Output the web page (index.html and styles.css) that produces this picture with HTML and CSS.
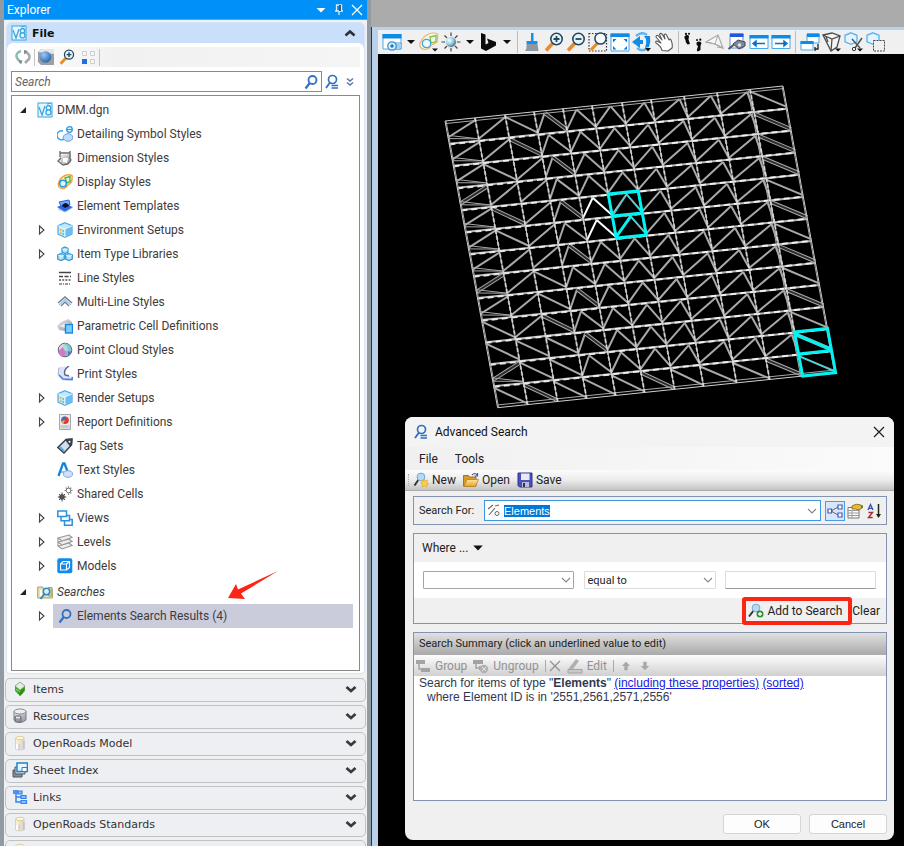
FILE: index.html
```html
<!DOCTYPE html>
<html lang="en">
<head>
<meta charset="utf-8">
<title>Explorer</title>
<link rel="stylesheet" href="styles.css">
</head>
<body>
<svg class="defs" aria-hidden="true">
  <defs>
    <linearGradient id="sky" x1="0" y1="0" x2="1" y2="1"><stop offset="0" stop-color="#d8f3ff"/><stop offset="1" stop-color="#55b4ee"/></linearGradient>
    <linearGradient id="grey" x1="0" y1="0" x2="1" y2="1"><stop offset="0" stop-color="#f2f3f6"/><stop offset="1" stop-color="#8d9099"/></linearGradient>
    <linearGradient id="gold" x1="0" y1="0" x2="0" y2="1"><stop offset="0" stop-color="#ffe39a"/><stop offset="1" stop-color="#e3a32c"/></linearGradient>
    <linearGradient id="cream" x1="0" y1="0" x2="1" y2="0"><stop offset="0" stop-color="#fff6c4"/><stop offset="1" stop-color="#d8d2cc"/></linearGradient>
    <radialGradient id="ball" cx=".35" cy=".3" r=".8"><stop offset="0" stop-color="#9cc8f4"/><stop offset="1" stop-color="#1c5ea8"/></radialGradient>
    <radialGradient id="sun" cx=".35" cy=".35" r=".7"><stop offset="0" stop-color="#fff"/><stop offset=".5" stop-color="#8fd4ee"/><stop offset="1" stop-color="#555"/></radialGradient>
    <symbol id="v8" viewBox="0 0 16 16"><rect x="1" y="1" width="14" height="14" fill="#e9f6fd" stroke="#3aa5e0"/><path d="M2 5l3 8 3-9M11.5 3.5a2 2 0 1 1 0 4.4 2.4 2.4 0 1 1 0 5 2.400 2.400 0 1 1 0-5 2 2 0 1 1 0-4.400" fill="none" stroke="#3aa5e0" stroke-width="1.300"/><path d="M10 2l4-1" stroke="#3aa5e0"/></symbol>
    <symbol id="detail" viewBox="0 0 16 16"><path d="M6 5a4.500 4.500 0 1 0 1 8" fill="none" stroke="#39a7ea" stroke-width="1.500"/><ellipse cx="11" cy="11.500" rx="4.800" ry="3.800" fill="#bcdcfa" stroke="#6f9fdb"/><circle cx="12.500" cy="3.500" r="2.800" fill="#dff2ff" stroke="#2c9be6" stroke-width="1.300"/><path d="M10 3.500h5" stroke="#2c9be6"/></symbol>
    <symbol id="dim" viewBox="0 0 16 16"><path d="M2 5l12-1v8l-4 3-6-2z" fill="url(#grey)"/><path d="M3 1v6M13 1v6M3 3h10M4 8l-3 3 5 4 5-1 3-4-2-3" fill="none" stroke="#6d6764" stroke-width="1.300"/><path d="M6 8h5l-1 5-4-1z" fill="#fff"/></symbol>
    <symbol id="display" viewBox="0 0 16 16"><path d="M1.500 9q-1 5 4 5.500 3 .500 5-3l4-3.500q1-4 .500-6.500-3-1.500-7 0Q3 4 1.500 9z" fill="#fff5e6" stroke="#f1a33b" stroke-width="1.400"/><path d="M8 4l5-1.500v5L10 9z" fill="#e9f8dd" stroke="#66b22e" stroke-width="1.400"/><circle cx="6" cy="9.500" r="3.300" fill="#dff4ff" stroke="#229be6" stroke-width="1.600"/></symbol>
    <symbol id="t-display" viewBox="0 0 20 20"><path d="M1 11q-1 6 5 6.500 4 0 6-4l6-3.500q1-5 .500-8-4-2-9 0-6 3-8.500 9z" fill="#fbf6ec" stroke="#eeb468" stroke-width="1.200"/><path d="M11 5l6-1.500v6L12 11z" fill="#f2faec" stroke="#7cc043" stroke-width="1.300"/><circle cx="7.500" cy="11.500" r="4.200" fill="#eef9ff" stroke="#3da5e6" stroke-width="1.300"/><path d="M13 16.500h6L16 19.500z" fill="#111"/></symbol>
    <symbol id="templates" viewBox="0 0 16 16"><path d="M2 4l10-2 1 5-8 3z" fill="#76a8ff" stroke="#2c63d6"/><path d="M0 9l7-3 9 3-8 5z" fill="#2d67e2"/><path d="M5 8q1-3 4-3 3 1 3 3l-4 2z" fill="#08132d"/><path d="M1 11l7 3 7-4" fill="none" stroke="#9dbef8"/></symbol>
    <symbol id="cube" viewBox="0 0 16 16"><path d="M8 .700l7 3v8.500l-7 3.100-7-3.100V3.700z" fill="#bfe7fd" stroke="#4cabe6" stroke-width="1.200"/><path d="M8 7l7-3.300v8.500L8 15.300z" fill="#6bbcf0"/><path d="M1 3.700L8 7l7-3.300M8 7v8" fill="none" stroke="#e8f8ff"/><path d="M3 8h1.500M3 11h1.500" stroke="#f2a53a" stroke-width="1.500"/><path d="M5.500 9h1.500M5.500 12h1.500" stroke="#6dbb4e" stroke-width="1.500"/></symbol>
    <symbol id="cubes" viewBox="0 0 16 16"><g fill="#bde3ee" stroke="#2c9be0" stroke-width="1.300"><path d="M8 1l3 1.500V6L8 7.500 5 6V2.500zM4 7.500L7.300 9v4L4 14.500.700 13V9zM12 7.500L15.300 9v4L12 14.500 8.700 13V9z"/></g><path d="M5 3l3 1 3-1M1 9l3 1.500L7 9M9 9l3 1.500L15 9" fill="none" stroke="#fff" stroke-width=".700"/></symbol>
    <symbol id="lines" viewBox="0 0 16 16"><path d="M2 2.500h12" stroke="#444" stroke-width="1.500"/><path d="M2 6.500h12" stroke="#444" stroke-width="1.500" stroke-dasharray="4 1.500"/><path d="M2 10h12" stroke="#555" stroke-width="1.300" stroke-dasharray="2 1.200"/><path d="M2 14h12" stroke="#777" stroke-width="1.300" stroke-dasharray="3 1 1 1"/></symbol>
    <symbol id="multi" viewBox="0 0 16 16"><path d="M1 9l7-6 7 6M4 12l4-4 4 4" fill="none" stroke="#777c84" stroke-width="1.400"/><path d="M2 11l6-5.500 6 5.500" fill="none" stroke="#8dcaf2" stroke-width="1.400"/></symbol>
    <symbol id="param" viewBox="0 0 16 16"><path d="M0 8l4-4 7-3 4 3v4H8v5l-6-1z" fill="url(#grey)"/><path d="M3 8l6-3 4 1H8v4z" fill="#eef0f8"/><rect x="8.500" y="6.500" width="7" height="8.500" fill="#77d0ff" stroke="#1686e0" stroke-width="1.400"/></symbol>
    <symbol id="cloud" viewBox="0 0 16 16"><circle cx="8" cy="8" r="6.800" fill="url(#grey)" stroke="#5a5f70"/><path d="M8 1q6 2 6.500 7L10 14 7 8z" fill="#7fc4d8"/><path d="M1.500 9L6 5l3 6-3 4q-4-1-4.500-6z" fill="#d47ac0"/><path d="M6 3l4 1 1 5-4-1z" fill="#a6e0d6"/><path d="M11 9l3 1-3 4z" fill="#5b6fc2"/></symbol>
    <symbol id="print" viewBox="0 0 16 16"><path d="M1 2q3-2 9-1-4 4-1 8l6 2-1 3q-5 2-9 0L1 10z" fill="#dbe4f7"/><path d="M2 9l4 4 9 .500.500-2.500" fill="none" stroke="#4b80e0" stroke-width="1.700"/><path d="M12 0Q6 4 8 9l4 1" fill="none" stroke="#5b6580" stroke-width="1.400"/><path d="M2 1.500L1 9" stroke="#a9b6d6"/></symbol>
    <symbol id="report" viewBox="0 0 16 16"><path d="M2.500.500h11v15h-11z" fill="#e9ebee" stroke="#a4a7ab"/><path d="M3.500 11h9v3.500h-9z" fill="#c9cbd0"/><circle cx="8" cy="6.300" r="3.800" fill="#e4392b"/><path d="M8 6.300V2.500A3.800 3.800 0 0 0 4.300 7z" fill="#2f72d8"/><path d="M8 6.300L4.300 7l2 3z" fill="#f3b52b"/></symbol>
    <symbol id="tag" viewBox="0 0 16 16"><path d="M.800 9.500L9 1.500 15 1l-.500 6L7 15z" fill="#cfe0ec" stroke="#39404a" stroke-width="1.500"/><path d="M9.500 1L15.500.500 15 7l-2 1.500-4.500-6z" fill="#39404a"/><circle cx="12.500" cy="3.700" r="1" fill="#fff"/><path d="M3 9l4 4" stroke="#5fa8dc" stroke-width="2"/></symbol>
    <symbol id="text" viewBox="0 0 16 16"><path d="M1.500 14L6 1.500h1.500l3 8" fill="none" stroke="#1584dd" stroke-width="2.300"/><path d="M4 10h4" stroke="#58b0ee" stroke-width="1.500"/><ellipse cx="11" cy="12" rx="4.500" ry="3.300" fill="#cfe0f8" stroke="#86a8d8"/></symbol>
    <symbol id="shared" viewBox="0 0 16 16"><circle cx="5" cy="11" r="2.800" fill="#444"/><path d="M5 6.500v9M.800 11h8.500M2 8l6 6M8 8l-6 6" stroke="#555" stroke-width="1"/><circle cx="11.500" cy="4.500" r="2.300" fill="#fff" stroke="#777"/><path d="M11.500.300v1.500M11.500 7.200v1.500M7.500 4.500H9M14 4.500h1.500M8.700 1.700l1 1M14.300 1.700l-1 1M14.300 7.300l-1-1" stroke="#777" stroke-width="1.200"/></symbol>
    <symbol id="views" viewBox="0 0 16 16"><g fill="#fff" stroke="#2a92dd" stroke-width="1.500"><path d="M7.500 9.500h7.700v5.700H7.500z"/><path d="M4 5.500h8.500v5.300H4z"/><path d="M.800 1h8.700v5.500H.800z"/></g></symbol>
    <symbol id="levels" viewBox="0 0 16 16"><g fill="#eee" stroke="#969696" stroke-width="1.100"><path d="M1 12l11-3 3 2.500L5 15z"/><path d="M1 8l11-3 3 2.500L5 11z"/><path d="M1 4l11-3 3 2.500L5 7z"/><path d="M1 4v3.500M1 8v3.500"/></g></symbol>
    <symbol id="models" viewBox="0 0 16 16"><rect x=".300" y=".300" width="15" height="15" rx="2" fill="#118bea"/><path d="M3.500 6h6v6h-6zM3.500 6l2.500-2.500h6.500v6L9.500 12M9.500 6l3-2.500" fill="none" stroke="#fff" stroke-width="1.100"/></symbol>
    <symbol id="folder" viewBox="0 0 16 16"><path d="M.700 3h5l1 2h8.600v9H.700z" fill="#e9e0b4" stroke="#a89f6d"/><path d="M11.500 3.500h3.500V12h-3.500z" fill="#d6c98e" stroke="#a89f6d"/><path d="M3 6h2v6H3z" fill="#fff"/><circle cx="9.500" cy="7.500" r="3.200" fill="#dff1fb" stroke="#2b8cc8" stroke-width="1.500"/><path d="M7.500 10l-4 5" stroke="#2b8cc8" stroke-width="2"/></symbol>
    <symbol id="find" viewBox="0 0 16 16"><circle cx="9.500" cy="6" r="4" fill="none" stroke="#2f71c6" stroke-width="1.800"/><path d="M6.800 9L2.500 14.500" stroke="#2f71c6" stroke-width="2.200"/></symbol>
    <symbol id="findeq" viewBox="0 0 16 16"><circle cx="8.500" cy="5.500" r="4" fill="none" stroke="#2f71c6" stroke-width="1.700"/><path d="M6 8.500L2 14" stroke="#2f71c6" stroke-width="1.900"/><path d="M7.500 11.500H14M7.500 14H14" stroke="#2f71c6" stroke-width="1.300"/></symbol>
    <symbol id="chev2" viewBox="0 0 16 16"><path d="M5 4.500l3 2.500 3-2.500M5 8.500l3 2.500 3-2.500" fill="none" stroke="#5a74ac" stroke-width="1.500"/></symbol>
    <symbol id="refresh" viewBox="0 0 16 16"><path d="M6 2Q0 4 2 9l4 5" fill="none" stroke="#8eb9b4" stroke-width="2.500"/><path d="M9.500 2.500Q16 5 14 10l-4 4" fill="none" stroke="#a3a8ae" stroke-width="2.500"/><path d="M3.500 11l4 .500-1.500 4zM12.500 2L9 5.500 9 1z" fill="#7d8c90"/></symbol>
    <symbol id="sphere" viewBox="0 0 16 16"><path d="M0 3L3 0h13v16H3l-3-3z" fill="#9b9ea2"/><path d="M0 3L3 0h13v5z" fill="#e6e6e6"/><circle cx="7.500" cy="8" r="5.800" fill="url(#ball)"/></symbol>
    <symbol id="zin" viewBox="0 0 20 20"><path d="M9 11L2 18.500" stroke="#e98c2a" stroke-width="3.600"/><circle cx="12.500" cy="7" r="5.700" fill="#e6f5fc" stroke="#23465f" stroke-width="1.600"/><path d="M9.500 7h6M12.500 4v6" stroke="#23465f" stroke-width="1.800"/></symbol>
    <symbol id="zout" viewBox="0 0 20 20"><path d="M9 11L2 18.500" stroke="#e98c2a" stroke-width="3.600"/><circle cx="12.500" cy="7" r="5.700" fill="#e6f5fc" stroke="#23465f" stroke-width="1.600"/><path d="M9.500 7h6" stroke="#23465f" stroke-width="1.800"/></symbol>
    <symbol id="zwin" viewBox="0 0 20 20"><path d="M1 1.500h17.500v17.500H1z" fill="none" stroke="#333" stroke-width="1.200" stroke-dasharray="1.500 1.500"/><path d="M9.500 11L3 18" stroke="#e98c2a" stroke-width="3.200"/><circle cx="12.500" cy="6.500" r="5.600" fill="#f2fafd" stroke="#23465f" stroke-width="1.500"/></symbol>
    <symbol id="squares" viewBox="0 0 16 16"><g fill="none" stroke="#d0d0d0"><path d="M2.500 2.500h4v4h-4zM10.500 2.500h4v4h-4zM10.500 10.500h4v4h-4z"/></g><path d="M2 10h5v5H2z" fill="#1f6fe0"/></symbol>
    <symbol id="items" viewBox="0 0 16 16"><path d="M8 1l5 4v5l-5 5-5-5V5z" fill="#4caf2a"/><path d="M8 1l5 4-5 4-5-4z" fill="#e2eee0" stroke="#8a9b88" stroke-width=".700"/><path d="M3 6l5 4 5-4-2 6-3 3z" fill="#2f8c17"/><path d="M4 8l4 3" stroke="#a8e88c"/></symbol>
    <symbol id="disk" viewBox="0 0 16 16"><path d="M2 3v9q6 5 12 0V3z" fill="url(#grey)" stroke="#7f7f86"/><ellipse cx="8" cy="3.500" rx="6" ry="2.500" fill="#eceef2" stroke="#8a8a92"/><rect x="3" y="8" width="6" height="6" rx="1" fill="#9a9aa6" stroke="#666672"/><path d="M4 9.500h4" stroke="#eee" stroke-width="1.500"/></symbol>
    <symbol id="cyl" viewBox="0 0 16 16"><path d="M3.500 3h8.500v11q-4 2-8.500 0z" fill="url(#cream)" stroke="#d8d2c0"/><ellipse cx="8" cy="3" rx="4.200" ry="1.700" fill="#fff9d9" stroke="#d8cfa4"/><path d="M4 9h3v5H4z" fill="#fff"/><path d="M7 9v5M12 6v8" stroke="#bcaee0"/></symbol>
    <symbol id="sheets" viewBox="0 0 16 16"><path d="M1 8h9v7H1z" fill="#888f98" stroke="#4e5660"/><path d="M3 5h10v7H3z" fill="#cbd2d8" stroke="#4e5660"/><path d="M5 1h10.500v8.500H5z" fill="#eaf6ff" stroke="#1f84c8" stroke-width="1.500"/><path d="M10 5.500h5v4h-5z" fill="#fff" stroke="#1f84c8"/></symbol>
    <symbol id="links" viewBox="0 0 16 16"><path d="M4 4v9h5M4 8h5" fill="none" stroke="#3583ef" stroke-width="1.500"/><path d="M1 1h5v4H1z" fill="#4b93f5"/><path d="M6 2h4v3H6zM9 6.500h5v3H9zM9 11.500h5.500v3H9z" fill="#8bbcff" stroke="#3583ef" stroke-width="1.200"/></symbol>
    <symbol id="down" viewBox="0 0 12 12"><path d="M1.500 4L6 8l4.500-4" fill="none" stroke="#3a3a3a" stroke-width="2.800"/></symbol>
    <symbol id="thin" viewBox="0 0 12 12"><path d="M2 4l4 4 4-4" fill="none" stroke="#888" stroke-width="1.100"/></symbol>
    <symbol id="caret" viewBox="0 0 10 10"><path d="M1 3h8L5 7z" fill="#111"/></symbol>
    <symbol id="closed" viewBox="0 0 12 12"><path d="M3.500 2l4.500 4-4.500 4z" fill="#fff" stroke="#444" stroke-width="1.100"/></symbol>
    <symbol id="open" viewBox="0 0 12 12"><path d="M9 3v6H3z" fill="#222"/></symbol>
    <symbol id="x" viewBox="0 0 12 12"><path d="M1 1l10 10M11 1L1 11" fill="none" stroke="currentColor" stroke-width="1.300"/></symbol>
    <symbol id="t-view" viewBox="0 0 20 20"><path d="M1 2.500h18V17H1z" fill="#fff" stroke="#4bacec"/><path d="M.500 2h19v4.500H.500z" fill="#0d8be8"/><path d="M12 11h7v6h-7z" fill="#fff" stroke="#3aa0e4"/><path d="M13 13h5M13 15h5" stroke="#3aa0e4"/><circle cx="10" cy="14" r="4.200" fill="#dcefff" stroke="#3a8fd0" stroke-width="1.300"/><circle cx="10" cy="14" r="1.700" fill="#2473bd"/></symbol>
    <symbol id="t-sun" viewBox="0 0 20 20"><path d="M10 .500v19M.500 10h19M3.500 3.500l13 13M16.500 3.500l-13 13" stroke="#444" stroke-width="1.200"/><circle cx="10" cy="10" r="5.500" fill="url(#sun)" stroke="#f0f0f0"/></symbol>
    <symbol id="t-bing" viewBox="0 0 20 20"><path d="M3 1l4.500 1.500v10l3-1.500-1.500-4.500 9 3.500v3.500L8 19l-5-2.500z" fill="#0b0b0b"/></symbol>
    <symbol id="t-brush" viewBox="0 0 20 20"><path d="M9 1h2.500v8h4v3H4.500V9H9z" fill="#1590ea"/><path d="M4.500 12h11l1 7H3q2-2 1.500-7z" fill="#8d97a1"/></symbol>
    <symbol id="t-fit" viewBox="0 0 20 20"><path d="M1 2h18v17H1z" fill="#fff" stroke="#47a9ec"/><path d="M.500 1.500h19V5H.500z" fill="#0d8be8"/><g fill="#0d7ad8"><path d="M3 7h3.500L3 10.500zM17 7h-3.500l3.500 3.500zM3 17.500h3.500L3 14zM17 17.500h-3.500L17 14z"/></g></symbol>
    <symbol id="t-rot" viewBox="0 0 20 20"><path d="M0 10l8-6v4h3v4H8v4z" fill="#128ce5"/><path d="M4 4q6-5 11-1M5 16q5 4 9 1" fill="none" stroke="#62b7f0" stroke-width="2.500"/><path d="M12 4h6q1 6-1 11l-4 1q2-5 1-9z" fill="#128ce5"/><path d="M13 16h6l-3 3.500z" fill="#111"/></symbol>
    <symbol id="t-hand" viewBox="0 0 20 20"><path d="M8 18.500Q7 14 2 11q-1-2 1-2l4 2L2 5q0-2 2-1.500L8 8 5.500 2.500q1-2 2.500-.500l3 5L10 3q1-2 2.500 0L15 8q1-2 2 0 2 5 1 8l-4 3z" fill="#fff" stroke="#555" stroke-width="1.100" stroke-linejoin="round"/></symbol>
    <symbol id="t-feet" viewBox="0 0 20 20"><g fill="#0a0a0a"><path d="M1.500 4.500Q4 2 6 4l-.500 3.500L7 12l-2.500.500Q2 10 2.500 8q-1.500-2-1-3.500zM13.500 10.500q3-2 5 .500l-1 3 0 4-2.500 1.500q-2-1-.500-3.500l.500-2q-2-1-1.500-3.500z"/><circle cx="3" cy="1.900" r="1.100"/><circle cx="6" cy="1.700" r="1"/><circle cx="14" cy="8" r="1"/><circle cx="17.300" cy="7.700" r="1.100"/></g></symbol>
    <symbol id="t-fly" viewBox="0 0 20 20"><path d="M1 10L13 3l5 13-8-4z" fill="#f7f7f7" stroke="#a8a8a8" stroke-width="1.200"/><path d="M1 10l9 2 3-9M10 12l8 4-6-1" fill="none" stroke="#a8a8a8"/></symbol>
    <symbol id="t-cam" viewBox="0 0 20 20"><path d="M3 2h13v14H3z" fill="#fff" stroke="#6388e8"/><path d="M3 1.500h13.500V5H3z" fill="#2455dc"/><path d="M6 12l5-4 7 2v4l-6 3z" fill="#818795" stroke="#3d4354"/><circle cx="12.500" cy="13" r="1.700" fill="#dce8f5"/><path d="M1.500 17l5-4" stroke="#4d5260" stroke-width="2"/></symbol>
    <symbol id="t-prev" viewBox="0 0 20 20"><path d="M1 3.500h18v13H1z" fill="#fff" stroke="#47a9ec"/><path d="M.500 3h19v3.500H.500z" fill="#0d8be8"/><path d="M4 11.500h12M4 11.500L7 9v5z" stroke="#0d70c8" stroke-width="1.500" fill="#0d70c8"/></symbol>
    <symbol id="t-next" viewBox="0 0 20 20"><path d="M1 3.500h18v13H1z" fill="#fff" stroke="#47a9ec"/><path d="M.500 3h19v3.500H.500z" fill="#0d8be8"/><path d="M4 11.500h12M16 11.500L13 9v5z" stroke="#0d70c8" stroke-width="1.500" fill="#0d70c8"/></symbol>
    <symbol id="t-copy" viewBox="0 0 20 20"><path d="M7 2h12v9H7z" fill="#fff" stroke="#47a9ec"/><path d="M7 1.500h12.500V5H7z" fill="#0d8be8"/><path d="M1 9.500h12V18H1z" fill="#fff" stroke="#47a9ec"/><path d="M.500 9h13v3H.500z" fill="#0d8be8"/><path d="M15 17h3v-5M15 15v4" fill="none" stroke="#222" stroke-width="1.300"/></symbol>
    <symbol id="t-vol" viewBox="0 0 20 20"><path d="M1 3l9-2 8 3-3 11-6 4z" fill="#f4f4f4" stroke="#4c4c4c" stroke-width="1.300"/><path d="M1 3l9 4 8-3M10 7L9 19M4 5l2 5" fill="none" stroke="#4c4c4c" stroke-width="1.300"/><path d="M13 16.500h6L16 19.500z" fill="#111"/></symbol>
    <symbol id="t-clip" viewBox="0 0 20 20"><path d="M7 .800l6 2.500v6.500l-6 2.500L1 9.800V3.300z" fill="#e2f4ff" stroke="#5cb3ea" stroke-width="1.300"/><path d="M18 6l-7 10M8 7l8 9" stroke="#555" stroke-width="1.500"/><circle cx="10" cy="17" r="1.700" fill="none" stroke="#333"/><path d="M13 16.500h6L16 19.500z" fill="#111"/></symbol>
    <symbol id="t-mask" viewBox="0 0 20 20"><path d="M7 .800l6 2.500v6.500l-6 2.500L1 9.800V3.300z" fill="#e2f4ff" stroke="#5cb3ea" stroke-width="1.300"/><path d="M7.500 8.500h11v10.500h-11z" fill="#f0f0f0" stroke="#444" stroke-dasharray="2 1"/></symbol>
    <symbol id="new" viewBox="0 0 16 16"><path d="M6 7L1.500 13.500" stroke="#333" stroke-width="2"/><circle cx="8" cy="5" r="3.900" fill="#b7d9f8" stroke="#7da6cc"/><path d="M11 7l1 2 2.500-1-.500 2.500L16 12l-2.300.700.300 2.300-2.500-1L9 15l.300-2.300L7.500 11l2-.700L9 8l2 1z" fill="#f6cf45" stroke="#d9a92a" stroke-width=".600"/></symbol>
    <symbol id="openf" viewBox="0 0 16 16"><path d="M.500 3.500h5l1 1.500H13v9H.500z" fill="#d79a2e" stroke="#a87522"/><path d="M.800 14.500L4 7.500h11.500l-3 7z" fill="url(#gold)" stroke="#b07a22" stroke-width=".700"/><path d="M9 3q3-3 5 0M14.500 1v3h-3" fill="none" stroke="#3b5b8a" stroke-width="1.200"/></symbol>
    <symbol id="save" viewBox="0 0 16 16"><path d="M1 1h14v14H2.500L1 13.500z" fill="#4b51b5" stroke="#30358c"/><path d="M4 1.500h8.500V8H4z" fill="#e8eafc"/><path d="M5 10h7v5H5z" fill="#b9bdd9"/><path d="M6 11h2v4H6z" fill="#2b2f6e"/></symbol>
    <symbol id="addto" viewBox="0 0 16 16"><path d="M6 7L1 13.500" stroke="#333" stroke-width="2"/><circle cx="8" cy="5" r="3.900" fill="#b7d9f8" stroke="#7da6cc"/><circle cx="12" cy="11" r="3.500" fill="#27922b"/><path d="M10 11h4M12 9v4" stroke="#fff" stroke-width="1.400"/></symbol>
    <symbol id="elem" viewBox="0 0 14 14"><path d="M1 5l5-4M2 11L8 4M8 2l4-1" fill="none" stroke="#666" stroke-width="1.100"/><circle cx="10" cy="9.500" r="2" fill="none" stroke="#666"/></symbol>
    <symbol id="net" viewBox="0 0 16 16"><path d="M4 8l7-4M4 8l7 4M4 8h2" stroke="#667" fill="none"/><g fill="#fff" stroke="#4a58b8" stroke-width="1.200"><path d="M1 6h3.500v4H1zM11 2h4v4h-4zM11 10h4v4h-4z"/></g></symbol>
    <symbol id="prop" viewBox="0 0 16 16"><path d="M1 4.500h11V15H1z" fill="#fff" stroke="#777"/><path d="M1 7.500h11M1 10h11M1 12.500h11M5 7v8" stroke="#999"/><path d="M5 3q4-3 9-1l1 3-3 2-3-1-4 0z" fill="#eab93c" stroke="#9a7420"/><path d="M14 2l2 .500V5l-2 0z" fill="#3f8b4a"/></symbol>
    <symbol id="az" viewBox="0 0 16 16"><path d="M2 7l2.500-5.500L7 7M3 5.300h3" fill="none" stroke="#2f4fc0" stroke-width="1.300"/><path d="M2.500 9.500h4l-4 5h4.200" fill="none" stroke="#a3302e" stroke-width="1.400"/><path d="M12.500 1v12" stroke="#222" stroke-width="1.500"/><path d="M10 11h5l-2.500 4z" fill="#222"/></symbol>
    <symbol id="grp" viewBox="0 0 16 16"><path d="M1 2h9v4H1zM6 10h9v4H6z" fill="#a3a3a3"/><path d="M4 6v5h3" fill="none" stroke="#a3a3a3" stroke-width="1.500"/></symbol>
    <symbol id="ungrp" viewBox="0 0 16 16"><path d="M0 2h10v4H0zM6 8h4v4H6z" fill="#a3a3a3"/><path d="M3 6v4h3" fill="none" stroke="#a3a3a3" stroke-width="1.500"/><circle cx="11" cy="11" r="4.200" fill="#b1b1b1"/><path d="M9 9l4 4M13 9l-4 4" stroke="#e4e4e4"/></symbol>
    <symbol id="edit" viewBox="0 0 16 16"><path d="M2 10l7-9 3 2-6 8H2z" fill="#b0b0b0"/><path d="M1 11.500h14v3.500H1z" fill="#c9c9c9" stroke="#a3a3a3"/></symbol>
    <symbol id="up" viewBox="0 0 12 12"><path d="M6 1l5 5H8v5H4V6H1z" fill="#a8a8a8"/></symbol>
    <symbol id="dn" viewBox="0 0 12 12"><path d="M6 11l5-5H8V1H4v5H1z" fill="#a8a8a8"/></symbol>
  </defs>
</svg>

<div class="app">
  <aside class="explorer">
    <header class="dock-title">
      <span class="dock-name">Explorer</span>
      <button aria-label="Window options"><svg class="i12" viewBox="0 0 12 12"><path d="M1.500 4h9L6 8.500z" fill="#fff"/></svg></button>
      <button aria-label="Pin"><svg class="i12" viewBox="0 0 12 12"><path d="M3.500 1h5v6h-5zM2 7h8M6 7v4" fill="none" stroke="#dcecf8" stroke-width="1.300"/><path d="M6 1h2v6H6z" fill="#5c5148"/></svg></button>
      <button aria-label="Close"><svg class="i12"><use href="#x"/></svg></button>
    </header>
    <div class="dock-body">
      <section class="file-panel">
        <button class="file-head"><svg class="i16"><use href="#v8"/></svg><b>File</b><svg class="i12" viewBox="0 0 12 12"><path d="M1.500 8.500L6 4.500l4.500 4" fill="none" stroke="#2c3036" stroke-width="2.600"/></svg></button>
        <div class="file-body">
          <div class="strip">
            <button aria-label="Refresh"><svg class="i16"><use href="#refresh"/></svg></button><span class="rule"></span>
            <button aria-label="Models"><svg class="i16"><use href="#sphere"/></svg></button>
            <button aria-label="Zoom"><svg class="i16"><use href="#zin"/></svg></button>
            <button aria-label="Arrange"><svg class="i16"><use href="#squares"/></svg></button><span class="rule"></span>
          </div>
          <div class="find">
            <div class="find-box"><input type="text" placeholder="Search" aria-label="Search"><button aria-label="Run search"><svg class="i16"><use href="#find"/></svg></button></div>
            <button aria-label="Advanced search"><svg class="i16"><use href="#findeq"/></svg></button>
            <button aria-label="More"><svg class="i16"><use href="#chev2"/></svg></button>
          </div>
          <div class="tree">
            <ul>
              <li class="row root"><svg class="i12"><use href="#open"/></svg><span class="node"><svg class="i16"><use href="#v8"/></svg>DMM.dgn</span></li>
              <li class="row leaf"><span class="node"><svg class="i16"><use href="#detail"/></svg>Detailing Symbol Styles</span></li>
              <li class="row leaf"><span class="node"><svg class="i16"><use href="#dim"/></svg>Dimension Styles</span></li>
              <li class="row leaf"><span class="node"><svg class="i16"><use href="#display"/></svg>Display Styles</span></li>
              <li class="row leaf"><span class="node"><svg class="i16"><use href="#templates"/></svg>Element Templates</span></li>
              <li class="row"><svg class="i12"><use href="#closed"/></svg><span class="node"><svg class="i16"><use href="#cube"/></svg>Environment Setups</span></li>
              <li class="row"><svg class="i12"><use href="#closed"/></svg><span class="node"><svg class="i16"><use href="#cubes"/></svg>Item Type Libraries</span></li>
              <li class="row leaf"><span class="node"><svg class="i16"><use href="#lines"/></svg>Line Styles</span></li>
              <li class="row leaf"><span class="node"><svg class="i16"><use href="#multi"/></svg>Multi-Line Styles</span></li>
              <li class="row leaf"><span class="node"><svg class="i16"><use href="#param"/></svg>Parametric Cell Definitions</span></li>
              <li class="row leaf"><span class="node"><svg class="i16"><use href="#cloud"/></svg>Point Cloud Styles</span></li>
              <li class="row leaf"><span class="node"><svg class="i16"><use href="#print"/></svg>Print Styles</span></li>
              <li class="row"><svg class="i12"><use href="#closed"/></svg><span class="node"><svg class="i16"><use href="#cube"/></svg>Render Setups</span></li>
              <li class="row"><svg class="i12"><use href="#closed"/></svg><span class="node"><svg class="i16"><use href="#report"/></svg>Report Definitions</span></li>
              <li class="row leaf"><span class="node"><svg class="i16"><use href="#tag"/></svg>Tag Sets</span></li>
              <li class="row leaf"><span class="node"><svg class="i16"><use href="#text"/></svg>Text Styles</span></li>
              <li class="row leaf"><span class="node"><svg class="i16"><use href="#shared"/></svg>Shared Cells</span></li>
              <li class="row"><svg class="i12"><use href="#closed"/></svg><span class="node"><svg class="i16"><use href="#views"/></svg>Views</span></li>
              <li class="row"><svg class="i12"><use href="#closed"/></svg><span class="node"><svg class="i16"><use href="#levels"/></svg>Levels</span></li>
              <li class="row"><svg class="i12"><use href="#closed"/></svg><span class="node"><svg class="i16"><use href="#models"/></svg>Models</span></li>
            </ul>
            <ul class="searches">
              <li class="row root"><svg class="i12"><use href="#open"/></svg><span class="node"><svg class="i16"><use href="#folder"/></svg><i>Searches</i></span></li>
              <li class="row"><svg class="i12"><use href="#closed"/></svg><span class="node selected"><svg class="i16"><use href="#find"/></svg>Elements Search Results (4)</span></li>
            </ul>
            <svg class="pointer" viewBox="0 0 52 32" aria-hidden="true"><path d="M1 28L9 14l2 5.500L51 1 14 23.500l4 5.500z" fill="#fc2414"/></svg>
          </div>
        </div>
      </section>
      <nav class="sections">
        <button><svg class="i16"><use href="#items"/></svg><span>Items</span><svg class="i12"><use href="#down"/></svg></button>
        <button><svg class="i16"><use href="#disk"/></svg><span>Resources</span><svg class="i12"><use href="#down"/></svg></button>
        <button><svg class="i16"><use href="#cyl"/></svg><span>OpenRoads Model</span><svg class="i12"><use href="#down"/></svg></button>
        <button><svg class="i16"><use href="#sheets"/></svg><span>Sheet Index</span><svg class="i12"><use href="#down"/></svg></button>
        <button><svg class="i16"><use href="#links"/></svg><span>Links</span><svg class="i12"><use href="#down"/></svg></button>
        <button><svg class="i16"><use href="#cyl"/></svg><span>OpenRoads Standards</span><svg class="i12"><use href="#down"/></svg></button>
        <button aria-label="Next section"><svg class="i16"><use href="#cyl"/></svg></button>
      </nav>
    </div>
  </aside>

  <main class="view">
    <div class="view-frame">
      <div class="view-tools">
        <button aria-label="View attributes"><svg><use href="#t-view"/></svg></button><button class="drop" aria-label="View attribute options"><svg><use href="#caret"/></svg></button>
        <button aria-label="Display style"><svg><use href="#t-display"/></svg></button>
        <button aria-label="Brightness"><svg><use href="#t-sun"/></svg></button><button class="drop" aria-label="Brightness options"><svg><use href="#caret"/></svg></button>
        <button aria-label="Background map"><svg><use href="#t-bing"/></svg></button><button class="drop" aria-label="Map options"><svg><use href="#caret"/></svg></button>
        <span class="bar"></span>
        <button aria-label="Update view"><svg><use href="#t-brush"/></svg></button>
        <button aria-label="Zoom in"><svg><use href="#zin"/></svg></button>
        <button aria-label="Zoom out"><svg><use href="#zout"/></svg></button>
        <button aria-label="Window area"><svg><use href="#zwin"/></svg></button>
        <button aria-label="Fit view"><svg><use href="#t-fit"/></svg></button>
        <button aria-label="Rotate view"><svg><use href="#t-rot"/></svg></button>
        <button aria-label="Pan view"><svg><use href="#t-hand"/></svg></button>
        <span class="bar"></span>
        <button aria-label="Walk"><svg><use href="#t-feet"/></svg></button>
        <button aria-label="Fly"><svg><use href="#t-fly"/></svg></button>
        <button aria-label="Camera"><svg><use href="#t-cam"/></svg></button>
        <button aria-label="View previous"><svg><use href="#t-prev"/></svg></button>
        <button aria-label="View next"><svg><use href="#t-next"/></svg></button>
        <span class="bar"></span>
        <button aria-label="Copy view"><svg><use href="#t-copy"/></svg></button>
        <button aria-label="Clip volume"><svg><use href="#t-vol"/></svg></button>
        <button aria-label="Clip"><svg><use href="#t-clip"/></svg></button>
        <button aria-label="Clip mask"><svg><use href="#t-mask"/></svg></button>
      </div>
      <div class="canvas">
        <svg class="mesh" id="mesh" viewBox="378 54 526 360" role="img" aria-label="Triangulated grid frame"></svg>

        <section class="dialog" role="dialog" aria-label="Advanced Search">
          <header class="dlg-title"><svg class="i16"><use href="#findeq"/></svg><h1>Advanced Search</h1><button aria-label="Close dialog"><svg class="i12"><use href="#x"/></svg></button></header>
          <div class="dlg-menu"><button>File</button><button>Tools</button></div>
          <div class="dlg-tools"><span class="grip"></span><button><svg class="i16"><use href="#new"/></svg>New</button><button><svg class="i16"><use href="#openf"/></svg>Open</button><button><svg class="i16"><use href="#save"/></svg>Save</button></div>
          <div class="dlg-body">
            <div class="box search-for">
              <label for="kind">Search For:</label>
              <div class="combo"><svg class="i14"><use href="#elem"/></svg><input id="kind" type="text" value="Elements"><svg class="i12"><use href="#thin"/></svg></div>
              <button class="on" aria-label="Show tree"><svg class="i16"><use href="#net"/></svg></button>
              <button aria-label="Properties"><svg class="i16"><use href="#prop"/></svg></button>
              <button aria-label="Sort"><svg class="i16"><use href="#az"/></svg></button>
            </div>
            <div class="box where">
              <button class="where-head">Where ...<svg class="i12"><use href="#caret"/></svg></button>
              <div class="criteria">
                <div class="pick strong"><select aria-label="Property"><option></option></select><svg class="i12"><use href="#thin"/></svg></div>
                <div class="pick op"><select aria-label="Operator"><option>equal to</option></select><svg class="i12"><use href="#thin"/></svg></div>
                <input type="text" aria-label="Value">
              </div>
              <div class="where-foot"><button class="add"><svg class="i16"><use href="#addto"/></svg>Add to Search</button><button>Clear</button></div>
            </div>
            <div class="box summary">
              <h2>Search Summary (click an underlined value to edit)</h2>
              <div class="sum-tools">
                <button disabled><svg class="i16"><use href="#grp"/></svg>Group</button>
                <button disabled><svg class="i16"><use href="#ungrp"/></svg>Ungroup</button>
                <span class="rule"></span>
                <button disabled aria-label="Delete"><svg class="i12"><use href="#x"/></svg></button>
                <button disabled><svg class="i16"><use href="#edit"/></svg>Edit</button>
                <span class="rule"></span>
                <button class="move" disabled aria-label="Move up"><svg class="i10"><use href="#up"/></svg></button>
                <button class="move" disabled aria-label="Move down"><svg class="i10"><use href="#dn"/></svg></button>
              </div>
              <div class="query">
                <p>Search for items of type "<b>Elements</b>" <a href="#">(including these properties)</a> <a href="#">(sorted)</a></p>
                <p class="clause">where Element ID is in '2551,2561,2571,2556'</p>
              </div>
            </div>
            <footer class="dlg-foot"><button>OK</button><button>Cancel</button></footer>
          </div>
        </section>
      </div>
    </div>
  </main>
</div>
<script src="app.js"></script>
</body>
</html>
```
FILE: styles.css
```css
* { box-sizing: border-box; }
body { margin: 0; background: #ababab; font-family: "Liberation Sans", Arial, sans-serif; color: #333; }
button { border: 0; padding: 0; background: none; font: inherit; color: inherit; display: flex; align-items: center; white-space: nowrap; }
ul, p, h1, h2 { margin: 0; padding: 0; list-style: none; font-weight: normal; }
svg { flex: none; display: block; }
.defs { position: absolute; width: 0; height: 0; }
.i10 { width: 10px; height: 10px; }
.i12 { width: 12px; height: 12px; }
.i14 { width: 14px; height: 14px; }
.i16 { width: 16px; height: 16px; }

.app { display: flex; height: 100vh; overflow: hidden; }

/* Docked explorer */
.explorer { width: 371px; flex: none; display: flex; flex-direction: column; background: #919ba3; padding: 0 4px; }
.dock-title { display: flex; align-items: center; gap: 6px; height: 19px; padding: 0 4px 0 3px; background: #0091f8; color: #fff; font: 12px Roboto, sans-serif; }
.dock-name { flex: 1; }
.dock-body { flex: 1; display: flex; flex-direction: column; gap: 4px; padding: 2px 2px 0; background: #f0f0f0; border-top: 1px solid #8d979e; overflow: hidden; }
.file-panel { border-radius: 6px 6px 4px 4px; background: #c9dffa; border: 1px solid #d5e5f8; }
.file-head { width: 100%; height: 20px; padding: 0 8px 0 4px; gap: 5px; font: 11px "DejaVu Sans", sans-serif; color: #111; }
.file-head b { flex: 1; text-align: left; }
.file-body { background: #fff; border-radius: 6px 6px 3px 3px; padding: 4px 4px 2px; }
.strip { display: flex; align-items: center; gap: 5px; height: 20px; padding: 0 4px; background: linear-gradient(90deg, #fff, #f1f1f1 30%, #f5f5f5); }
.rule { width: 1px; height: 17px; background: #c4c4c4; }
.strip .rule { margin: 0 -2px; }
.find { display: flex; align-items: center; gap: 2px; margin-top: 4px; padding-right: 2px; }
.find-box { flex: 1; display: flex; align-items: center; height: 21px; border: 1px solid #8a8a8a; padding: 0 2px 0 3px; }
.find-box input { flex: 1; min-width: 0; border: 0; padding: 0; outline: 0; font: italic 12px Roboto, sans-serif; }
.find-box input::placeholder { color: #666; }
.tree { position: relative; margin-top: 3px; height: 576px; padding-top: 2px; border: 1px solid #8a8a8a; font: 12px Roboto, sans-serif; color: #3c3c3c; }
.row { display: flex; align-items: center; height: 24px; padding: 0 6px 0 24px; }
.row.root { padding-left: 5px; }
.row.leaf { padding-left: 41px; }
.node { flex: 1; display: flex; align-items: center; gap: 4px; height: 24px; margin-left: 5px; padding-left: 4px; }
.row.leaf .node { margin-left: 0; }
.root .node { margin-left: 4px; }
.node.selected { background: #cbccdb; }
.searches { margin-top: 2px; }
.pointer { position: absolute; left: 215px; top: 474px; width: 52px; height: 32px; }
.sections { display: flex; flex-direction: column; gap: 3px; margin: 0 -1px; }
.sections button { height: 24px; padding: 0 8px 2px 6px; gap: 5px; border: 1px solid #bfc1c5; border-radius: 5px; background: #eeeff3; font: 11px "DejaVu Sans", sans-serif; }
.sections span { flex: 1; text-align: left; }

/* Model view */
.view { flex: 1; min-width: 0; display: flex; padding-top: 27px; }
.view-frame { flex: 1; min-width: 0; display: flex; flex-direction: column; background: #b9d1ea; border-left: 1px solid #333; padding: 3px 0 0 6px; }
.view-tools { display: flex; align-items: center; height: 24px; padding-left: 3px; background: #f0f0f0; overflow: hidden; }
.view-tools button { width: 22px; justify-content: center; flex: none; }
.view-tools .drop { width: 15px; }
.view-tools svg { width: 20px; height: 20px; }
.view-tools .drop svg { width: 10px; height: 10px; }
.bar { width: 1px; height: 22px; margin: 0 3px; background: #bbb; flex: none; }
.canvas { position: relative; flex: 1; background: #000; overflow: hidden; }
.mesh { width: 526px; height: 360px; }
.beam { fill: none; stroke: #cfcfcf; stroke-width: 1; }
.chord { fill: none; stroke: #a8a8a8; stroke-width: 1; }
.rail { fill: none; stroke: #b8b8b8; stroke-width: 2; }
.dash { fill: none; stroke: #fff; stroke-width: 2; stroke-dasharray: 6 4; opacity: .8; }
.post { fill: none; stroke: #dcdcdc; stroke-width: 2; stroke-dasharray: 4 2; opacity: .75; }
.brace { fill: none; stroke: #a9a9a9; stroke-width: 2; }
.brace.split { stroke-width: 4; stroke: #a9a9a9; }
.brace.core { stroke-width: 2; stroke: #2c2c2c; }
.brace.lit { stroke: #fff; }
.hot { fill: none; stroke: #00f4f4; stroke-width: 3; }
.hot.fine { stroke-width: 1; }

/* Advanced search dialog */
.dialog { position: absolute; left: 27px; right: 10px; top: 363px; border-radius: 8px; background: #f0f0f0; overflow: hidden; color: #222; font-size: 11px; }
.dlg-title { display: flex; align-items: center; gap: 6px; height: 30px; padding: 0 9px 0 8px; background: #f3f3f3; }
.dlg-title h1 { flex: 1; font: 12px Roboto, sans-serif; color: #111; }
.dlg-menu { display: flex; align-items: center; gap: 17px; height: 23px; padding-left: 14px; background: linear-gradient(90deg, #f0f0f0, #fbfbfb); font: 12px Roboto, sans-serif; }
.dlg-tools { display: flex; align-items: center; gap: 7px; height: 21px; padding-left: 3px; background: linear-gradient(#fcfcfc, #ececec 50%, #c4c4c4); border-bottom: 1px solid #aaa; font: 12px Roboto, sans-serif; }
.dlg-tools button { gap: 3px; }
.grip { width: 1px; height: 12px; border-left: 1px dotted #aaa; margin-right: -3px; }
.dlg-body { display: flex; flex-direction: column; gap: 8px; padding: 5px 7px 6px 8px; }
.box { border: 1px solid #8494b0; }
.search-for { display: flex; align-items: center; gap: 1px; height: 29px; padding: 0 3px 0 5px; }
.search-for label { width: 64px; font: 11px Roboto, sans-serif; }
.combo { flex: 1; display: flex; align-items: center; gap: 3px; height: 21px; margin-right: 3px; padding: 0 2px; border: 1px solid #3f95e0; background: #fff; }
.combo input { flex: 1; min-width: 0; border: 0; outline: 0; padding: 0; background: none; font: 11px "Liberation Sans", sans-serif; color: #222; }
.combo input::selection { background: #0078d7; color: #fff; }
.search-for button { width: 18px; height: 20px; justify-content: center; }
.search-for .on { width: 20px; border: 1px solid #4d9be6; background: #d5e7f8; }
.where-head { height: 28px; padding-left: 8px; gap: 4px; font: 12px Roboto, sans-serif; }
.criteria { display: grid; grid-template-columns: 151px 132px 151px; justify-content: space-between; align-items: center; height: 36px; padding: 0 10px 0 9px; background: #fff; }
.criteria select, .criteria input { width: 100%; height: 18px; padding: 0 3px; border: 1px solid #dcdcdc; border-bottom-color: #999; border-radius: 1px; background: #fff; font: 11px Roboto, sans-serif; color: #222; appearance: none; }
.pick { position: relative; }
.pick svg { position: absolute; right: 2px; top: 3px; pointer-events: none; }
.strong select { border-color: #a5a5a5; }
.op select { border-bottom-color: #dcdcdc; }
.where-foot { display: flex; align-items: center; justify-content: flex-end; gap: 10px; height: 25px; padding: 0 6px; font: 12px Roboto, sans-serif; }
.add { position: relative; gap: 3px; }
.add::after { content: ""; position: absolute; inset: -6px -10px -6px -6px; border: 4px solid #fc2414; border-radius: 3px; z-index: 1; }
.summary h2 { height: 22px; padding-left: 5px; background: linear-gradient(#e0e0e0, #a9a9a9); font: 11px/22px Roboto, sans-serif; color: #222; }
.sum-tools { display: flex; align-items: center; gap: 6px; height: 21px; padding-left: 1px; background: linear-gradient(#fdfdfd, #d0d0d0); color: #929292; font: 12px Roboto, sans-serif; }
.sum-tools button { gap: 4px; }
.sum-tools .rule { height: 12px; background: #aaa; }
.sum-tools .rule + button { margin-left: -3px; }
.sum-tools .rule + .move { margin-left: 0; }
.move { width: 13px; justify-content: center; }
.query { height: 124px; padding: 0 5px; background: #fff; color: #303850; font: 12px/14px "Liberation Sans", sans-serif; }
.query a { color: #2020e0; }
.clause { padding-left: 8px; }
.dlg-foot { display: flex; justify-content: flex-end; gap: 8px; padding-top: 5px; }
.dlg-foot button { width: 78px; height: 20px; justify-content: center; background: #fdfdfd; border: 1px solid #d4d4d4; border-radius: 3px; }
```
FILE: app.js
```js
// Draws the triangulated frame: 11 bays across, 13 courses down.
const bays = [0, 30, 60, 89, 118, 147, 177, 206, 239, 272, 305, 338];
const apex = [0, 0, 0, 0.35, 0.45, 0.6, 0.75, 0.85, 0.8, 0.9];
const lean = ['/////////\\\\/\\', '//\\/\\\\////\\\\\\', '\\\\/////\\\\\\\\\\\\'];
const rows = 13;
const at = (x, v) => [445 + x + v * 4.05, 121 - x * 0.1036 + v * 22.05];
const parts = [];
const line = (cls, pts) => parts.push(
  `<polyline class="${cls}" points="${pts.map(p => p.map(n => n.toFixed(1)).join(',')).join(' ')}"/>`);

function brace(a, b, split, cls = '') {
  line(`brace ${split ? 'split' : ''} ${cls}`, [a, b]);
  if (split) line('brace core', [a, b]);
}

for (let r = 0; r < rows; r++) {
  for (let c = 0; c < 11; c++) {
    const l = bays[c], w = bays[c + 1] - l;
    const tl = at(l, r + 0.1), tr = at(l + w, r + 0.1);
    const bl = at(l, r + 0.95), br = at(l + w, r + 0.95);
    const split = (r * 3 + c * 5) % 4 === 1;
    if (c === 10 || r === 12) {
      brace(tl, br, c === 10 ? r % 2 === 1 || r === 2 : split);
    } else if (c < 3) {
      if (lean[c][r] === '/') brace(tr, c ? bl : at(l, r + 0.75), c === 0 && split);
      else brace(tl, br, split);
      if (c === 0 && lean[0][r] === '/') {
        line('chord', [at(l, r + 0.65), br]);
        line('chord', [at(l, r + 0.8), br]);
      }
    } else {
      const top = at(l + w * apex[c], r + 0.1);
      const lit = c === 4 && (r === 4 || r === 5) ? 'lit' : '';
      brace(bl, top, false, lit);
      brace(top, br, c === 3 && r % 2 === 0, lit);
    }
  }
}
for (let v = 0; v <= rows; v++) {
  if (v > 0 && v < rows) {
    line('rail', [at(0, v + 0.03), at(338, v + 0.03)]);
    line('dash', [at(0, v + 0.06), at(338, v + 0.02)]);
  } else {
    const inner = v ? v - 0.12 : 0.12;
    line('beam', [at(0, v), at(338, v)]);
    line('chord', [at(0, inner), at(338, inner)]);
  }
}
bays.forEach((x, i) => {
  line('beam', [at(x, 0), at(x, rows)]);
  if (i > 0 && i < 11) line('post', [at(x, 0), at(x, rows)]);
});
line('chord', [at(303, 0), at(303, rows)]);
line('chord', [at(1, 0), at(1, rows)]);
line('chord', [at(337, 0), at(337, rows)]);

function highlight(c, r) {
  const l = bays[c], e = bays[c + 1];
  line('hot', [at(l, r), at(e, r), at(e, r + 2), at(l, r + 2), at(l, r), at(e, r)]);
  line('hot', [at(l, r + 1), at(e, r + 1)]);
}
highlight(5, 4);
highlight(10, 11);
const peak = at(147 + 18, 4.1), peak2 = at(147 + 18, 5.1);
line('hot fine', [at(149, 4.95), peak, at(176, 4.95)]);
line('hot', [at(147, 5.95), peak2]);
line('hot fine', [peak2, at(177, 5.95)]);
line('hot', [at(305, 11.1), at(338, 11.95)]);
line('hot fine', [at(305, 12.1), at(338, 12.95)]);
document.getElementById('mesh').innerHTML = parts.join('');

const kind = document.getElementById('kind');
kind.focus();
kind.select();
```
